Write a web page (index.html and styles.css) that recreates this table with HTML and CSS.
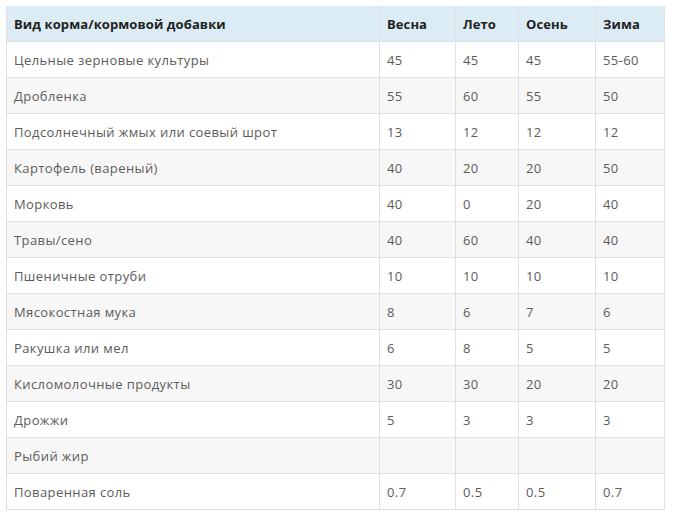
FILE: index.html
```html
<!DOCTYPE html>
<html lang="ru">
<head>
<meta charset="utf-8">
<link rel="stylesheet" href="styles.css">
</head>
<body>
<table class="feed">
  <colgroup>
    <col class="c-name"><col class="c-spring"><col class="c-summer"><col class="c-autumn"><col class="c-winter">
  </colgroup>
  <thead>
    <tr><th>Вид корма/кормовой добавки</th><th>Весна</th><th>Лето</th><th>Осень</th><th>Зима</th></tr>
  </thead>
  <tbody>
    <tr><td>Цельные зерновые культуры</td><td>45</td><td>45</td><td>45</td><td>55-60</td></tr>
    <tr><td>Дробленка</td><td>55</td><td>60</td><td>55</td><td>50</td></tr>
    <tr><td>Подсолнечный жмых или соевый шрот</td><td>13</td><td>12</td><td>12</td><td>12</td></tr>
    <tr><td>Картофель (вареный)</td><td>40</td><td>20</td><td>20</td><td>50</td></tr>
    <tr><td>Морковь</td><td>40</td><td>0</td><td>20</td><td>40</td></tr>
    <tr><td>Травы/сено</td><td>40</td><td>60</td><td>40</td><td>40</td></tr>
    <tr><td>Пшеничные отруби</td><td>10</td><td>10</td><td>10</td><td>10</td></tr>
    <tr><td>Мясокостная мука</td><td>8</td><td>6</td><td>7</td><td>6</td></tr>
    <tr><td>Ракушка или мел</td><td>6</td><td>8</td><td>5</td><td>5</td></tr>
    <tr><td>Кисломолочные продукты</td><td>30</td><td>30</td><td>20</td><td>20</td></tr>
    <tr><td>Дрожжи</td><td>5</td><td>3</td><td>3</td><td>3</td></tr>
    <tr><td>Рыбий жир</td><td></td><td></td><td></td><td></td></tr>
    <tr><td>Поваренная соль</td><td>0.7</td><td>0.5</td><td>0.5</td><td>0.7</td></tr>
  </tbody>
</table>
</body>
</html>
```
FILE: styles.css
```css
html, body {
  margin: 0;
  background: #ffffff;
}
body {
  padding: 6px;
  font-family: "Open Sans", "Liberation Sans", sans-serif;
}
.feed {
  border-collapse: collapse;
  table-layout: fixed;
  width: 658px;
  font-size: 13px;
}
.c-name { width: 373px; }
.c-spring { width: 76px; }
.c-summer { width: 63px; }
.c-autumn { width: 77px; }
.c-winter { width: 69px; }
.feed th, .feed td {
  border: 1px solid #e0e0e2;
  text-align: left;
  padding: 0 7px;
  white-space: nowrap;
}
.feed th {
  height: 34px;
  background: #dcecf5;
  color: #222;
  font-weight: 700;
  letter-spacing: 0.1px;
  border-top-color: #dcecf5;
}
.feed td {
  height: 35px;
  color: #5c5c5c;
  font-weight: 400;
  letter-spacing: 0.4px;
}
.feed tbody tr:nth-child(even) td {
  background: #f7f7f7;
}
```
